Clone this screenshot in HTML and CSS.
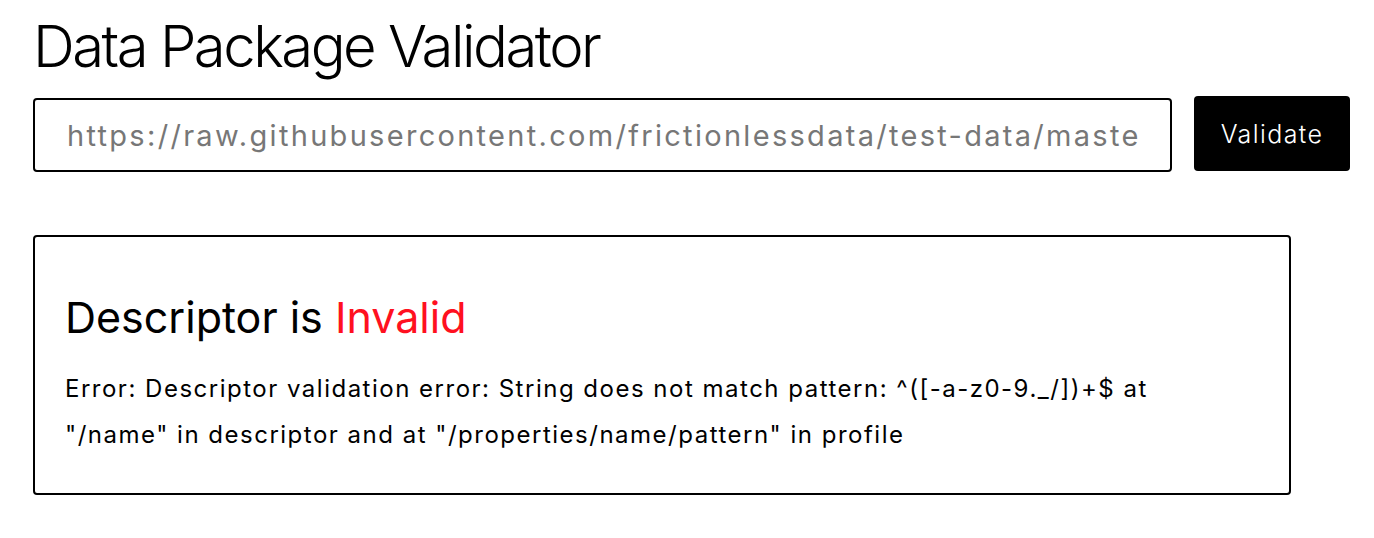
FILE: index.html
```html
<!DOCTYPE html>
<html lang="en">
<head>
    <meta charset="UTF-8">
    <meta name="viewport" content="width=device-width, initial-scale=1.0">
    <title>Data Package Validator</title>
    <link rel="stylesheet" href="styles.css">
</head>
<body>
    <div class="container">
        <h1>Data Package Validator</h1>
        <form class="validate-form">
            <input class="url-input" type="text" placeholder="https://raw.githubusercontent.com/frictionlessdata/test-data/master/packages/invalid-name/datapackage.json">
            <button class="validate-btn" type="button">Validate</button>
        </form>
        <div class="result">
            <h2>Descriptor is <span class="invalid">Invalid</span></h2>
            <p class="error">Error: Descriptor validation error: String does not match pattern: ^([-a-z0-9._/])+$ at "/name" in descriptor and at "/properties/name/pattern" in profile</p>
        </div>
    </div>
</body>
</html>
```

FILE: styles.css
```css
body {
    font-family: Inter, Roboto, sans-serif;
    background-color: #fff;
    color: #000;
    margin: 0;
    padding: 0;
}
.container {
    padding: 10px 24px 0 33px;
}
h1 {
    font-size: 58px;
    font-weight: 300;
    letter-spacing: -2.5px;
    margin: 0;
    line-height: 72px;
}
.validate-form {
    display: flex;
    align-items: flex-start;
    gap: 22px;
    margin-top: 14px;
}
.url-input {
    flex: 1;
    height: 74px;
    box-sizing: border-box;
    border: 2px solid #000;
    border-radius: 4px;
    padding: 0 32px;
    font-family: Inter, Roboto, sans-serif;
    font-size: 29px;
    font-weight: 400;
    letter-spacing: 2.3px;
    outline: none;
    margin-top: 2px;
}
.url-input::placeholder {
    color: #777;
}
.validate-btn {
    width: 156px;
    height: 75px;
    background: #000;
    color: #fff;
    border: none;
    border-radius: 4px;
    font-family: Inter, Roboto, sans-serif;
    font-size: 25px;
    font-weight: 300;
    letter-spacing: 1.4px;
}
.result {
    width: 1258px;
    box-sizing: border-box;
    margin-top: 63px;
    border: 2px solid #000;
    border-radius: 4px;
    padding: 54px 30px 35px 30px;
}
h2 {
    font-size: 43px;
    font-weight: 400;
    margin: 0 0 23px;
}
.invalid {
    color: #ff1020;
}
.error {
    font-size: 24px;
    letter-spacing: 1.5px;
    line-height: 46px;
    margin: 0;
    width: 1100px;
}
```
